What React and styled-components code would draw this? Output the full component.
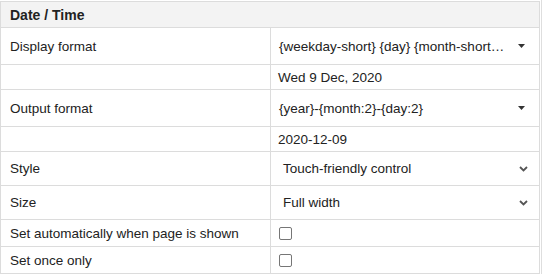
import React from "react";
import styled, { createGlobalStyle } from "styled-components";

const Global = createGlobalStyle`
  html, body { margin: 0; padding: 0; background: #fff; }
  body { font-family: "Liberation Sans", Arial, sans-serif; font-size: 13.5px; color: #222; }
`;

const Frame = styled.div`
  padding-top: 1px;
  width: 541px;
  border-right: 1px solid #dedede;
`;

const Table = styled.div`
  width: 538px;
  border: 1px solid #dcdcdc;
  display: flex;
  flex-direction: column;
`;

const Header = styled.div`
  height: 25px;
  background: #f3f3f3;
  border-bottom: 1px solid #dcdcdc;
  display: flex;
  align-items: center;
  padding-left: 9px;
  font-weight: bold;
  font-size: 14px;
  color: #222;
`;

const Row = styled.div`
  display: grid;
  grid-template-columns: 270px 1fr;
  height: ${(p) => p.$h}px;
  border-bottom: 1px solid #dcdcdc;
  &:last-child { border-bottom: none; }
`;

const Label = styled.div`
  display: flex;
  align-items: center;
  padding-left: 9px;
  border-right: 1px solid #dcdcdc;
  color: #222;
  white-space: nowrap;
`;

const Value = styled.div`
  display: flex;
  align-items: center;
  padding-left: ${(p) => p.$pl ?? 7}px;
  min-width: 0;
  color: #222;
  white-space: nowrap;
`;

const CustomSelect = styled.div`
  flex: 1;
  display: flex;
  align-items: center;
  min-width: 0;
  padding-left: 1px;
  padding-right: 14px;
`;

const SelectText = styled.span`
  flex: 1;
  min-width: 0;
  white-space: nowrap;
  padding-right: 8px;
  color: #222;
`;

const NativeSelect = styled.div`
  flex: 1;
  display: flex;
  align-items: center;
  padding-left: 5px;
  padding-right: 11px;
  color: #333;
`;

const Box = styled.span`
  width: 11px;
  height: 11px;
  margin-left: 1px;
  border: 1px solid #767676;
  border-radius: 2px;
  background: #fff;
`;

const Caret = () => (
  <svg width="7" height="4" viewBox="0 0 7 4">
    <path d="M0 0 H7 L3.5 4 Z" fill="#333" />
  </svg>
);

const Chevron = () => (
  <svg width="9" height="6" viewBox="0 0 9 6">
    <path d="M1 1 L4.5 4.5 L8 1" fill="none" stroke="#555" strokeWidth="1.8" />
  </svg>
);

export default function App() {
  return (
    <>
      <Global />
      <Frame>
        <Table>
          <Header>Date / Time</Header>
          <Row $h={36}>
            <Label>Display format</Label>
            <Value>
              <CustomSelect>
                <SelectText>{"{weekday-short} {day} {month-short…"}</SelectText>
                <Caret />
              </CustomSelect>
            </Value>
          </Row>
          <Row $h={24}>
            <Label />
            <Value>Wed 9 Dec, 2020</Value>
          </Row>
          <Row $h={36}>
            <Label>Output format</Label>
            <Value>
              <CustomSelect>
                <SelectText>{"{year}-{month:2}-{day:2}"}</SelectText>
                <Caret />
              </CustomSelect>
            </Value>
          </Row>
          <Row $h={24}>
            <Label />
            <Value>2020-12-09</Value>
          </Row>
          <Row $h={33}>
            <Label>Style</Label>
            <Value>
              <NativeSelect>
                <SelectText>Touch-friendly control</SelectText>
                <Chevron />
              </NativeSelect>
            </Value>
          </Row>
          <Row $h={33}>
            <Label>Size</Label>
            <Value>
              <NativeSelect>
                <SelectText>Full width</SelectText>
                <Chevron />
              </NativeSelect>
            </Value>
          </Row>
          <Row $h={26}>
            <Label>Set automatically when page is shown</Label>
            <Value>
              <Box />
            </Value>
          </Row>
          <Row $h={26}>
            <Label>Set once only</Label>
            <Value>
              <Box />
            </Value>
          </Row>
        </Table>
      </Frame>
    </>
  );
}
